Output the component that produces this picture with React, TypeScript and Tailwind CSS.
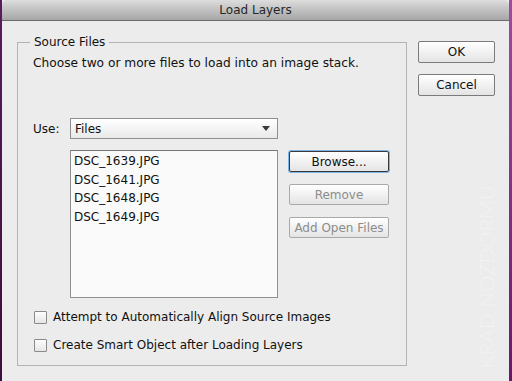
import React from "react";

const font = { fontFamily: '"DejaVu Sans", "Lucida Grande", sans-serif' };

function MacButton({
  children,
  disabled,
  focused,
  className = "",
}: {
  children: React.ReactNode;
  disabled?: boolean;
  focused?: boolean;
  className?: string;
}) {
  return (
    <div
      className={
        "flex items-center justify-center h-[21px] text-[12px] leading-none rounded-[2px] bg-gradient-to-b from-[#ffffff] to-[#e4e4e4] " +
        (disabled
          ? "border border-[#a9a9a9] text-[#8c8c8c] "
          : focused
          ? "border border-[#3a3a3a] text-[#111] shadow-[0_0_0_1px_#7fb2e5] "
          : "border border-[#7b7b7b] text-[#111] ") +
        className
      }
    >
      {children}
    </div>
  );
}

function Checkbox({ label }: { label: string }) {
  return (
    <div className="flex items-center h-[16px] ml-[1px]">
      <div className="w-[13px] h-[13px] border border-[#8a8a8a] bg-gradient-to-b from-[#fdfdfd] to-[#e6e6e6] rounded-[1px]" />
      <span className="ml-[6px] text-[12px] text-[#111] leading-[16px]">{label}</span>
    </div>
  );
}

export default function App() {
  const files = ["DSC_1639.JPG", "DSC_1641.JPG", "DSC_1648.JPG", "DSC_1649.JPG"];
  return (
    <div
      className="relative w-[512px] h-[381px] flex bg-[#ececec] overflow-hidden"
      style={font}
    >
      <div className="w-[2px] bg-gradient-to-b from-[#5b1a5d] to-[#3d0c40]" />
      <div className="flex-1 flex flex-col">
        <div className="h-[21px] rounded-t-[5px] bg-gradient-to-b from-[#dddddd] to-[#a6a6a6] border-b border-[#6b6b6b] flex items-center justify-center">
          <span className="text-[12px] text-[#262626] leading-none">Load Layers</span>
        </div>
        <div className="flex-1 flex pl-[15px] pt-[13px]">
          <fieldset className="w-[390px] h-[332px] border border-[#b3b3b3] px-[15px] flex flex-col">
            <legend className="-ml-[3px] px-[4px] text-[12px] leading-[16px] text-[#111]">
              Source Files
            </legend>
            <div className="mt-[5px] text-[12.2px] leading-[16px] text-[#111]">
              Choose two or more files to load into an image stack.
            </div>
            <div className="mt-[47px] flex items-center">
              <span className="w-[37px] text-[12px] text-[#111]">Use:</span>
              <div className="w-[208px] h-[21px] border border-[#8f8f8f] bg-gradient-to-b from-[#ffffff] to-[#e9e9e9] flex items-center pl-[4px] pr-[7px] justify-between">
                <span className="text-[12px] text-[#111]">Files</span>
                <svg width="8" height="5" viewBox="0 0 8 5">
                  <path d="M0 0 H8 L4 5 Z" fill="#3a3a3a" />
                </svg>
              </div>
            </div>
            <div className="mt-[11px] ml-[37px] flex">
              <div className="w-[208px] h-[148px] border border-[#8f8f8f] border-t-[#777] bg-[#fafafa] pl-[3px] pt-[1px]">
                {files.map((f) => (
                  <div key={f} className="text-[12px] leading-[18.7px] text-[#111]">
                    {f}
                  </div>
                ))}
              </div>
              <div className="ml-[11px] flex flex-col gap-[12px] pt-[1px]">
                <MacButton focused className="w-[100px]">
                  Browse...
                </MacButton>
                <MacButton disabled className="w-[100px]">
                  Remove
                </MacButton>
                <MacButton disabled className="w-[100px]">
                  Add Open Files
                </MacButton>
              </div>
            </div>
            <div className="mt-[11px] flex flex-col gap-[12px]">
              <Checkbox label="Attempt to Automatically Align Source Images" />
              <Checkbox label="Create Smart Object after Loading Layers" />
            </div>
          </fieldset>
          <div className="ml-[11px] pt-[7px] flex flex-col gap-[11px]">
            <MacButton className="w-[77px] h-[22px]">OK</MacButton>
            <MacButton className="w-[77px] h-[22px]">Cancel</MacButton>
          </div>
        </div>
      </div>
      <div className="w-[3px] bg-gradient-to-b from-[#a04aa0] to-[#6a166c]" />
      <div
        className="absolute right-[16px] bottom-[13px] [writing-mode:vertical-rl] rotate-180 text-[20px] leading-none tracking-[0.5px] text-white/35 font-light"
        style={{ fontFamily: 'Lato, "Open Sans", sans-serif' }}
      >
        KRAD NOZDORMU
      </div>
    </div>
  );
}
